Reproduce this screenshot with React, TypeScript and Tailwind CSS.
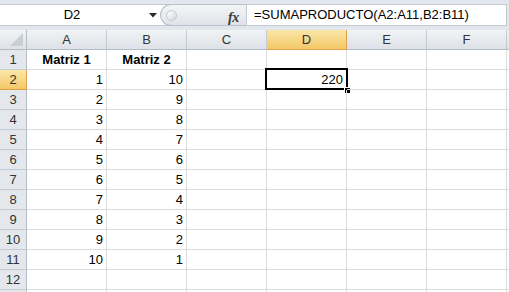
import React from "react";

const cols = ["A", "B", "C", "D", "E", "F"];

type Cell = { text: string; align: "left" | "center" | "right"; bold?: boolean };

function rowData(r: number): (Cell | null)[] {
  if (r === 1)
    return [
      { text: "Matriz 1", align: "center", bold: true },
      { text: "Matriz 2", align: "center", bold: true },
      null,
      null,
      null,
      null,
    ];
  if (r >= 2 && r <= 11) {
    return [
      { text: String(r - 1), align: "right" },
      { text: String(12 - r), align: "right" },
      null,
      r === 2 ? { text: "220", align: "right" } : null,
      null,
      null,
    ];
  }
  return [null, null, null, null, null, null];
}

function FormulaBar() {
  return (
    <div className="h-[30px] bg-[#e2e7ed] pt-[4px] pr-[2px]">
      <div className="h-[22px] flex bg-white border-y border-r border-[#c3cad3]">
        <div className="w-[160px] relative flex items-center justify-center text-[13px] text-black">
          <span className="ml-[-16px]">D2</span>
          <svg className="absolute left-[149px] top-[8px]" width="8" height="5" viewBox="0 0 8 5">
            <path d="M0 0 L8 0 L4 4.5 Z" fill="#2b2b2b" />
          </svg>
        </div>
        <div className="w-[86px] relative flex items-center rounded-l-full border border-r-0 border-[#b8c0ca] bg-gradient-to-b from-[#f4f5f7] to-[#dfe3e8] mt-[-1px] h-[22px]">
          <div className="ml-[5px] w-[11px] h-[11px] rounded-full border border-[#c2c7ce] bg-gradient-to-br from-[#ffffff] to-[#d4d8de]" />
          <span className="absolute left-[67px] top-[2px] font-['Liberation_Serif',serif] italic font-bold text-[14px] text-[#3a3a3a] tracking-[-0.5px]">
            fx
          </span>
        </div>
        <div className="w-px h-full bg-[#c3cad3]" />
        <div className="flex-1 flex items-center pl-[7px] text-[13px] text-black">
          =SUMAPRODUCTO(A2:A11,B2:B11)
        </div>
      </div>
    </div>
  );
}

function HeaderRow() {
  return (
    <div className="flex h-[20px]">
      <div className="w-[27px] h-full relative bg-gradient-to-b from-[#f1f3f5] to-[#dde2e8] border-r border-b border-[#b4bcc6]">
        <svg className="absolute right-[3px] bottom-[3px]" width="13" height="13" viewBox="0 0 13 13">
          <path d="M13 0 L13 13 L0 13 Z" fill="#c9ced5" />
        </svg>
      </div>
      {cols.map((c) =>
        c === "D" ? (
          <div
            key={c}
            className="w-[80px] h-full flex items-center justify-center bg-gradient-to-b from-[#fbe7a8] to-[#f3c865] border-r border-b border-[#e0a04a] text-[13px] text-[#333]"
          >
            {c}
          </div>
        ) : (
          <div
            key={c}
            className="w-[80px] h-full flex items-center justify-center bg-gradient-to-b from-[#f1f3f5] to-[#dde2e8] border-r border-b border-r-[#c4cad2] border-b-[#b4bcc6] text-[13px] text-[#333]"
          >
            {c}
          </div>
        )
      )}
      <div className="flex-1 h-full bg-gradient-to-b from-[#f1f3f5] to-[#dde2e8] border-b border-[#b4bcc6]" />
    </div>
  );
}

function DataRow({ r }: { r: number }) {
  const data = rowData(r);
  const sel = r === 2;
  return (
    <div className="flex h-[20px]">
      <div
        className={
          sel
            ? "w-[27px] h-full flex items-center justify-center bg-gradient-to-b from-[#fbe7a8] to-[#f3c865] border-r border-b border-[#e0a04a] text-[13px] text-[#333]"
            : "w-[27px] h-full flex items-center justify-center bg-[#e4e8ed] border-r border-b border-r-[#b4bcc6] border-b-[#c4cad2] text-[13px] text-[#333]"
        }
      >
        {r <= 12 ? r : ""}
      </div>
      {data.map((cell, i) => {
        const isSel = sel && i === 3;
        return (
          <div
            key={i}
            className={
              "w-[80px] h-full relative flex items-center border-r border-b border-[#dadcdd] text-[13px] text-black pt-px px-[3px] " +
              (cell?.align === "right" ? "justify-end " : cell?.align === "center" ? "justify-center " : "justify-start ") +
              (cell?.bold ? "font-bold" : "")
            }
          >
            {cell?.text}
            {isSel && (
              <>
                <div className="absolute left-[-2px] top-[-2px] right-[-2px] bottom-[-1px] border-2 border-black" />
                <div className="absolute right-[-5px] bottom-[-5px] w-[7px] h-[7px] bg-black border border-white" />
              </>
            )}
          </div>
        );
      })}
      <div className="flex-1 h-full border-b border-[#dadcdd]" />
    </div>
  );
}

export default function App() {
  const rows = Array.from({ length: 13 }, (_, i) => i + 1);
  return (
    <div className="w-[509px] h-[292px] overflow-hidden bg-white font-['Liberation_Sans',Arial,sans-serif]">
      <FormulaBar />
      <HeaderRow />
      {rows.map((r) => (
        <DataRow key={r} r={r} />
      ))}
    </div>
  );
}
